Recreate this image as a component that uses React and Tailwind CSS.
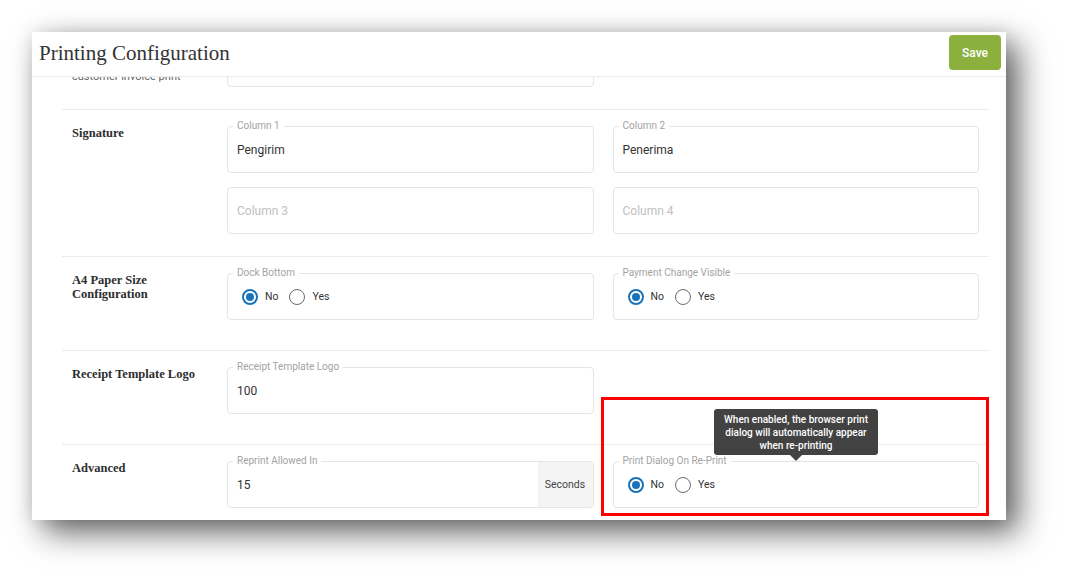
import React from "react";

function Radio({ checked, label }) {
  return (
    <div className="flex items-center">
      {checked ? (
        <span className="w-[16px] h-[16px] rounded-full border-2 border-[#1a73b8] flex items-center justify-center">
          <span className="w-[8px] h-[8px] rounded-full bg-[#1a73b8]" />
        </span>
      ) : (
        <span className="w-[16px] h-[16px] rounded-full border-[1.5px] border-[#6b6b6b]" />
      )}
      <span className="ml-[7px] text-[10.5px] text-[#333]">{label}</span>
    </div>
  );
}

function RadioGroup() {
  return (
    <div className="flex items-center gap-[11px] pl-[14px]">
      <Radio checked label="No" />
      <Radio label="Yes" />
    </div>
  );
}

function Box({ legend, children, addon }) {
  return (
    <div className="relative h-[47px] border border-[#e2e5ea] rounded-[4px] flex items-stretch">
      {legend && (
        <span className="absolute -top-[7px] left-[5px] px-[4px] bg-white text-[10px] leading-[12px] text-[#a3a3a3]">
          {legend}
        </span>
      )}
      <div className="flex-1 flex items-center">{children}</div>
      {addon && (
        <div className="w-[55px] bg-[#f4f4f4] flex items-center justify-center text-[10.5px] text-[#444] rounded-r-[3px]">
          {addon}
        </div>
      )}
    </div>
  );
}

function Value({ children, placeholder }) {
  return (
    <span className={"pl-[9px] text-[12px] " + (placeholder ? "text-[#c0c0c0]" : "text-[#333]")}>
      {children}
    </span>
  );
}

function Section({ label, children, pb }) {
  return (
    <div className={"flex pt-[16px] border-t border-[#e9ebee] " + pb}>
      <div className="w-[165px] pl-[10px] shrink-0">{label}</div>
      <div className="flex-1 grid grid-cols-2 gap-x-[19px] gap-y-[14px] pr-[10px]">{children}</div>
    </div>
  );
}

function Label({ children }) {
  return (
    <div className="font-['Liberation_Serif',serif] font-bold text-[12.5px] leading-[14px] text-[#2e2e2e]">
      {children}
    </div>
  );
}

export default function App() {
  return (
    <div className="w-[1072px] h-[585px] bg-white overflow-hidden pl-[32px] pt-[32px] font-['Roboto',sans-serif]">
      <div className="relative w-[974px] h-[488px] bg-white flex flex-col shadow-[12px_12px_30px_rgba(0,0,0,0.62),0_0_16px_rgba(0,0,0,0.1)]">
        <div className="h-[45px] shrink-0 border-b border-[#ebebeb] flex items-center pl-[7px] relative z-10 bg-white">
          <h1 className="font-['Liberation_Serif',serif] text-[21px] text-[#333]">Printing Configuration</h1>
          <button className="ml-auto mr-[5px] self-start mt-[3px] h-[35px] w-[52px] rounded-[4px] bg-[#8bb03e] text-white text-[12px] font-medium">
            Save
          </button>
        </div>
        <div className="flex-1 overflow-hidden ml-[30px] mr-[17px]">
          <div className="-mt-[54px]">
            <Section
              pb="pb-[22px]"
              label={
                <div className="pt-[30px] text-[11px] leading-[13px] text-[#666]">customer invoice print</div>
              }
            >
              <Box />
              <div />
            </Section>

            <Section pb="pb-[22px]" label={<Label>Signature</Label>}>
              <Box legend="Column 1">
                <Value>Pengirim</Value>
              </Box>
              <Box legend="Column 2">
                <Value>Penerima</Value>
              </Box>
              <Box>
                <Value placeholder>Column 3</Value>
              </Box>
              <Box>
                <Value placeholder>Column 4</Value>
              </Box>
            </Section>

            <Section
              pb="pb-[30px]"
              label={
                <Label>
                  A4 Paper Size
                  <br />
                  Configuration
                </Label>
              }
            >
              <Box legend="Dock Bottom">
                <RadioGroup />
              </Box>
              <Box legend="Payment Change Visible">
                <RadioGroup />
              </Box>
            </Section>

            <Section pb="pb-[30px]" label={<Label>Receipt Template Logo</Label>}>
              <Box legend="Receipt Template Logo">
                <Value>100</Value>
              </Box>
              <div />
            </Section>

            <Section pb="pb-[30px]" label={<Label>Advanced</Label>}>
              <Box legend="Reprint Allowed In" addon="Seconds">
                <Value>15</Value>
              </Box>
              <Box legend="Print Dialog On Re-Print">
                <RadioGroup />
              </Box>
            </Section>
          </div>
        </div>

        <div className="absolute left-[569px] top-[365px] w-[388px] h-[119px] border-[3px] border-[#ff0000] pointer-events-none" />

        <div className="absolute left-[682px] top-[377px] w-[164px] h-[46px] bg-[#424242] rounded-[3px] flex items-center justify-center text-center text-white text-[10px] leading-[13px] font-medium">
          When enabled, the browser print
          <br />
          dialog will automatically appear
          <br />
          when re-printing
          <span className="absolute -bottom-[6px] left-[76px] w-0 h-0 border-l-[6px] border-r-[6px] border-t-[6px] border-l-transparent border-r-transparent border-t-[#424242]" />
        </div>
      </div>
    </div>
  );
}
